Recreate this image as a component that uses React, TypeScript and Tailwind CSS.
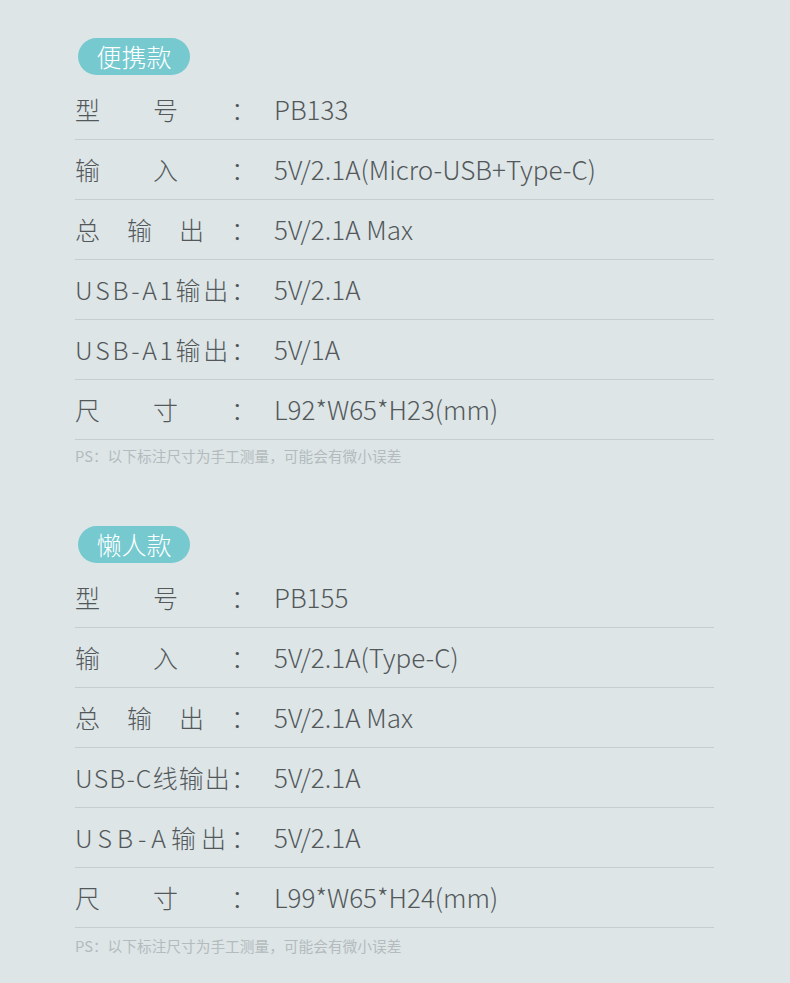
import React from 'react';

type Spec = { label: string; value: string };

const sections: { title: string; model: Spec[] }[] = [
  {
    title: '便携款',
    model: [
      { label: '型号：', value: 'PB133' },
      { label: '输入：', value: '5V/2.1A(Micro-USB+Type-C)' },
      { label: '总输出：', value: '5V/2.1A Max' },
      { label: 'USB-A1输出：', value: '5V/2.1A' },
      { label: 'USB-A1输出：', value: '5V/1A' },
      { label: '尺寸：', value: 'L92*W65*H23(mm)' },
    ],
  },
  {
    title: '懒人款',
    model: [
      { label: '型号：', value: 'PB155' },
      { label: '输入：', value: '5V/2.1A(Type-C)' },
      { label: '总输出：', value: '5V/2.1A Max' },
      { label: 'USB-C线输出：', value: '5V/2.1A' },
      { label: 'USB-A输出：', value: '5V/2.1A' },
      { label: '尺寸：', value: 'L99*W65*H24(mm)' },
    ],
  },
];

const font = { fontFamily: '"Noto Sans CJK SC", "Noto Sans", sans-serif' };

// label characters spread across a fixed width, like the justified labels in the design
const Label: React.FC<{ text: string }> = ({ text }) => (
  <div className="flex w-[181px] justify-between text-[25px]">
    {Array.from(text).map((ch, i) => (
      <span key={i}>{ch}</span>
    ))}
  </div>
);

const Section: React.FC<{ title: string; model: Spec[] }> = ({ title, model }) => (
  <div>
    <div className="ml-[3px] flex h-[37px] w-[112px] items-center justify-center rounded-full bg-[#75c9cf] text-[25px] font-light leading-none text-white">
      {title}
    </div>
    <div className="mt-[5px]">
      {model.map((row, i) => (
        <div
          key={i}
          className="flex h-[60px] items-center border-b border-[#c6cdcf] pb-px font-light leading-none text-[#53585a]"
        >
          <Label text={row.label} />
          <span className="ml-[18px] text-[26px]">{row.value}</span>
        </div>
      ))}
    </div>
  </div>
);

export default function App() {
  return (
    <div className="min-h-[983px] w-[790px] bg-[#dde5e7] pl-[75px] pr-[76px] pt-[38px]" style={font}>
      <Section {...sections[0]} />
      <p className="mt-[7px] text-[14.7px] leading-[17px] text-[#b3bbbd]">PS：以下标注尺寸为手工测量，可能会有微小误差</p>
      <div className="mt-[62px]">
        <Section {...sections[1]} />
      </div>
      <p className="mt-[9px] text-[14.7px] leading-[17px] text-[#b3bbbd]">PS：以下标注尺寸为手工测量，可能会有微小误差</p>
    </div>
  );
}
